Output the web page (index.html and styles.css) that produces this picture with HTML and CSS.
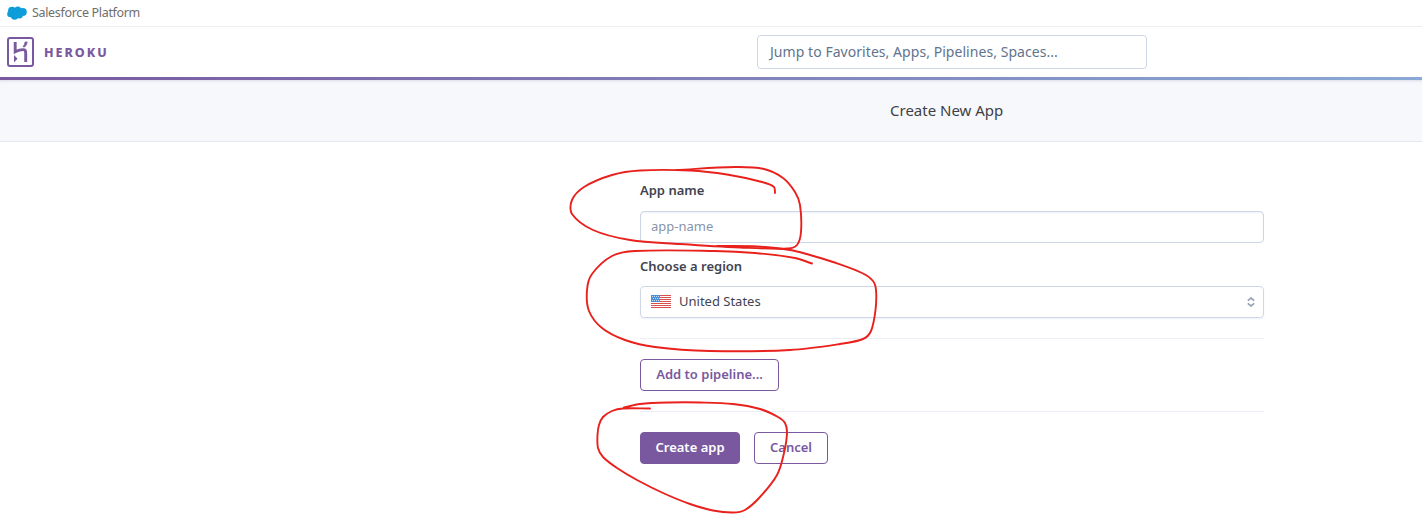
FILE: index.html
```html
<!DOCTYPE html>
<html lang="en">
<head>
<meta charset="utf-8">
<title>Create New App | Heroku</title>
<link rel="stylesheet" href="styles.css">
</head>
<body>
<div class="platform-bar">
  <svg class="cloud" width="20" height="14" viewBox="0 0 20 14" fill="#0d9dda"><circle cx="5" cy="4.6" r="3.9"/><circle cx="10.8" cy="4.1" r="3.5"/><circle cx="15.7" cy="6" r="4.1"/><circle cx="3.5" cy="8" r="3.3"/><circle cx="7.6" cy="10" r="3.7"/><circle cx="12.3" cy="9" r="3.6"/></svg>
  <span class="platform-name">Salesforce Platform</span>
</div>
<header class="header">
  <svg class="logo" width="27" height="30" viewBox="0 0 27 30" fill="none" stroke="#79589f"><rect x="1" y="1" width="25" height="28" rx="2" stroke-width="2"/><path d="M8.2 5V14.800C11 13.400 13.800 12.600 16 12.600C18 12.600 18.700 13.800 18.700 15.500V25" stroke-width="2.900"/><path d="M16 9.800Q17.700 7.700 18.200 5H20.200Q19.800 7.700 17.900 9.800Z" fill="#79589f" stroke-width=".8"/><path d="M7 18V25.500L10.500 21.700Z" fill="#79589f" stroke="none"/></svg>
  <span class="wordmark">HEROKU</span>
  <div class="search"><span class="search-text">Jump to Favorites, Apps, Pipelines, Spaces...</span></div>
</header>
<div class="gradient"></div>
<div class="subheader"><h1 class="title">Create New App</h1></div>
<main class="form">
  <label class="label label-name">App name</label>
  <div class="field field-name"><span class="placeholder">app-name</span></div>
  <label class="label label-region">Choose a region</label>
  <div class="field field-region">
    <svg class="flag" width="20" height="13" viewBox="0 0 20 13"><rect width="20" height="13" rx="1" fill="#fff"/><path d="M0 .5H20M0 2.5H20M0 4.5H20M0 6.5H20M0 8.5H20M0 10.5H20M0 12.5H20" stroke="#d8504d"/><rect width="9" height="7" fill="#4a90d9"/><path d="M1 1.5H9M2 3.5H9M1 5.5H9" stroke="#c3ddf5" stroke-dasharray="1 1"/></svg>
    <span class="region">United States</span>
    <svg class="chevrons" width="8" height="10" viewBox="0 0 8 10" fill="none" stroke="#96a3b6" stroke-width="1.700"><path d="M.8 3.700L4 1L7.200 3.700M.8 6.300L4 9L7.200 6.300"/></svg>
  </div>
  <hr class="rule">
  <button class="button button-pipeline"><span class="pipeline-text">Add to pipeline...</span></button>
  <hr class="rule">
  <div class="actions">
    <button class="button button-primary"><span class="create-text">Create app</span></button>
    <button class="button button-cancel"><span class="cancel-text">Cancel</span></button>
  </div>
</main>
<svg class="marks" width="1422" height="514" viewBox="0 0 1422 514"></svg>
<script src="marks.js"></script>
</body>
</html>
```
FILE: styles.css
```css
* { box-sizing: border-box; }
body { margin: 0; height: 514px; overflow: hidden; background: #fff; font: 13px/20px "Noto Sans", sans-serif; color: #3f4450; position: relative; }
svg { display: block; flex: none; }
span, h1 { white-space: nowrap; }
.platform-bar { height: 27px; padding-left: 7px; border-bottom: 1px solid #eceef3; display: flex; align-items: center; gap: 5px; }
.platform-name { color: #706e6b; font-size: 12.5px; letter-spacing: -.33px; }
.header { height: 50px; display: flex; align-items: center; padding-left: 7px; }
.wordmark { width: 67px; margin: 2px 0 0 10px; color: #79589f; font-weight: 800; font-size: 12.5px; letter-spacing: 2px; }
.search { width: 390px; height: 34px; margin-left: 646px; border: 1px solid #cfd7e6; border-radius: 4px; padding: 0 12px; display: flex; align-items: center; font-size: 14px; letter-spacing: .05px; color: #62748d; }
.gradient { height: 3px; background: linear-gradient(90deg, #79589f, #89a9d6); }
.subheader { height: 62px; background: #f7f8fc; border-bottom: 1px solid #e4e8f0; box-shadow: inset 0 3px 3px -2px #d9dce5; padding: 0 0 2px 890px; display: flex; align-items: center; }
.title { margin: 0; font-size: 15px; font-weight: 400; color: #3f3f44; }
.form { width: 624px; margin-left: 640px; padding-top: 38px; }
.label { display: block; width: max-content; font-weight: 600; font-size: 13px; }
.field { height: 32px; border: 1px solid #cfd7e6; border-radius: 4px; padding: 0 10px 2px; display: flex; align-items: center; }
.field-name { margin-top: 11px; color: #8794ab; box-shadow: inset 0 1px 2px #edf0f7; }
.label-region { margin-top: 13px; }
.field-region { margin-top: 10px; box-shadow: 0 1px 2px #edf0f7; }
.flag { margin: 1px 8px 0 0; }
.chevrons { margin: 2px -2px 0 auto; }
.rule { border: 0; height: 1px; background: #ebeef4; margin: 20px 0; }
.button { height: 32px; border: 1px solid #79589f; border-radius: 4px; padding: 0 0 2px; background: #fff; color: #79589f; font: 600 13px/20px "Noto Sans", sans-serif; display: flex; align-items: center; justify-content: center; }
.button-pipeline { width: 139px; }
.actions { display: flex; gap: 14px; }
.button-primary { width: 100px; background: #79589f; color: #fff; }
.button-cancel { width: 74px; }
.marks { position: absolute; inset: 0; fill: none; stroke: #e8211d; stroke-width: 1.9; stroke-linecap: round; stroke-linejoin: round; pointer-events: none; }
```
FILE: marks.js
```js
// Freehand pen strokes, smoothed through their sample points.
const strokes = [
  [[775,193],[774,187],[762,182],[727,174.5],[690,170.5],[640,170.5],[612,175],[584,187],[572,200],[572,214],[593,230],[630,240],[680,244],[740,247.500],[788,248.500],[797,245],[801,232],[800,205],[795,192],[783,178],[764,169],[735,167],[676,170]],
  [[812,263.500],[795,258],[755,253],[715,251],[635,251],[612,256],[592,274],[587,290],[589,311],[602,328],[625,340],[655,347],[710,351],[790,350],[840,344],[863,339],[871,331],[875.500,310],[876,290],[873,281],[862,273],[833,262],[810,255],[790,250],[757,246.500],[717,246]],
  [[650,408.500],[623,408.500],[612,411],[603,417],[599,425],[597.500,435],[598,448],[603,457],[617,468],[637,480],[663,493],[690,504],[713,510.500],[733,512.500],[745,510],[760,497],[777,475],[784,453],[787,433],[785,423],[778,417],[760,409],[733,404],[700,402.500],[670,402.500],[640,404],[624,407.500]]
];
const svg = document.querySelector('.marks');
for (const points of strokes) {
  let d = 'M' + points[0];
  for (let i = 0; i < points.length - 1; i++) {
    const a = points[i], b = points[i + 1];
    const before = points[i - 1] || a, after = points[i + 2] || b;
    const length = Math.hypot(b[0] - a[0], b[1] - a[1]);
    const spanA = length + Math.hypot(a[0] - before[0], a[1] - before[1]);
    const spanB = length + Math.hypot(after[0] - b[0], after[1] - b[1]);
    const c1 = a.map((v, k) => v + (b[k] - before[k]) * length / spanA / 3);
    const c2 = b.map((v, k) => v - (after[k] - a[k]) * length / spanB / 3);
    d += 'C' + c1 + ' ' + c2 + ' ' + b;
  }
  const path = document.createElementNS('http://www.w3.org/2000/svg', 'path');
  path.setAttribute('d', d);
  svg.appendChild(path);
}
```
